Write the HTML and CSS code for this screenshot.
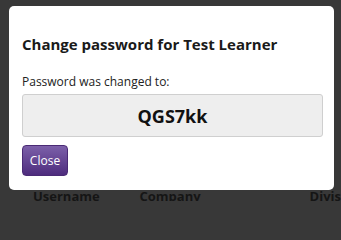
FILE: index.html
```html
<!DOCTYPE html>
<html>
<head>
<meta charset="utf-8">
<link rel="stylesheet" href="styles.css">
</head>
<body>
<div class="dialog">
  <h3 class="title">Change password for Test Learner</h3>
  <p class="label">Password was changed to:</p>
  <div class="pw">QGS7kk</div>
  <button class="close">Close</button>
</div>
<div class="thead">
  <span class="c1">Username</span>
  <span class="c2">Company</span>
  <span class="c3">Divis</span>
</div>
</body>
</html>
```
FILE: styles.css
```css
html, body {
  margin: 0;
  padding: 0;
  height: 201px;
  background: #383838;
  overflow: hidden;
  font-family: "Open Sans", "DejaVu Sans", sans-serif;
}
.dialog {
  margin: 6px 0 0 9px;
  width: 325px;
  height: 184px;
  box-sizing: border-box;
  background: #fff;
  border-radius: 5px;
  padding: 28px 11px 0 13px;
}
.title {
  margin: 0;
  font-size: 15px;
  line-height: 20px;
  font-weight: 700;
  color: #1a1a1a;
}
.label {
  margin: 20px 0 0;
  font-size: 12px;
  line-height: 16px;
  color: #222;
}
.pw {
  margin-top: 4px;
  height: 43px;
  box-sizing: border-box;
  background: #eeeeee;
  border: 1px solid #cfcfcf;
  border-radius: 3px;
  display: flex;
  align-items: center;
  justify-content: center;
  font-size: 18px;
  font-weight: 700;
  color: #111;
}
.close {
  margin-top: 8px;
  width: 46px;
  height: 31px;
  padding: 0;
  border: 1px solid #4a2a75;
  border-radius: 4px;
  background: linear-gradient(#7c60a9, #4e2c7e);
  color: #fff;
  font-family: "Open Sans", "DejaVu Sans", sans-serif;
  font-size: 12px;
  display: block;
}
.thead {
  display: flex;
  padding: 0 0 0 33px;
  font-size: 13px;
  font-weight: 700;
  line-height: 12px;
  color: #151515;
  white-space: nowrap;
}
.c1 { width: 107px; }
.c2 { width: 171px; }
```
